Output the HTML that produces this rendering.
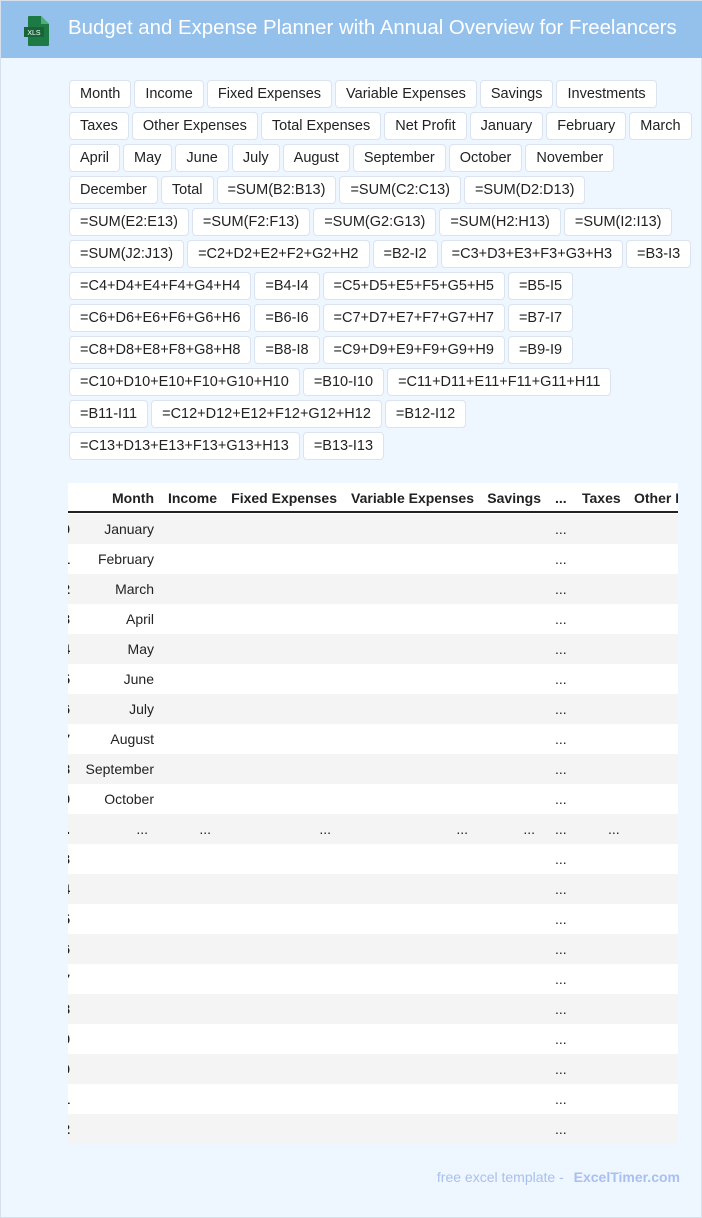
<!DOCTYPE html>
<html><head><meta charset="utf-8"><style>
*{box-sizing:border-box;margin:0;padding:0}
body{width:702px;height:1218px;background:#eef6ff;font-family:"Liberation Sans",sans-serif;position:relative;overflow:hidden;border:1px solid #d6e0ec}
.hdr{position:absolute;left:0;top:0;width:702px;height:57px;background:#93c1ec}
.hdr h1{position:absolute;left:67px;top:16px;font-size:20.4px;font-weight:normal;color:#fff;white-space:nowrap}
.tags{position:absolute;left:68px;top:79px;width:634px;display:flex;flex-wrap:wrap;gap:0 3px}
.tag{height:28px;line-height:26px;padding:0 10px;margin-bottom:4px;background:#fff;border:1px solid #dbe3ee;border-radius:4px;font-size:14.5px;color:#222;white-space:nowrap}
.br{flex-basis:100%;height:0}
.tbl{position:absolute;left:67px;top:482px;width:610px;height:660px;overflow:hidden;background:#fff}
.row{position:absolute;left:0;width:610px;height:30px;font-size:14px;color:#222}
.row span{position:absolute;top:7px;white-space:nowrap}
.g{background:#f4f4f4}
.th{font-weight:bold;border-bottom:2px solid #222;height:30px}
.foot{position:absolute;right:21px;top:1168px;font-size:14px;color:#aac0ec}
.foot b{color:#a9bff0;margin-left:6px}
</style></head><body>
<div class="hdr">
<svg style="position:absolute;left:22px;top:14px" width="28" height="32" viewBox="0 0 28 32"><path d="M6 1h12l8 8v21a1 1 0 0 1-1 1H6a1 1 0 0 1-1-1V2a1 1 0 0 1 1-1z" fill="#1e7a45"/><path d="M18 1v8h8z" fill="#4caf74"/><rect x="1" y="12" width="20" height="10" fill="#17643a"/><text x="11" y="20" font-size="7" fill="#fff" text-anchor="middle" font-family="Liberation Sans">XLS</text></svg>
<h1>Budget and Expense Planner with Annual Overview for Freelancers</h1></div>
<div class="tags">
<span class="tag">Month</span><span class="tag">Income</span><span class="tag">Fixed Expenses</span><span class="tag">Variable Expenses</span><span class="tag">Savings</span><span class="tag">Investments</span><div class="br"></div>
<span class="tag">Taxes</span><span class="tag">Other Expenses</span><span class="tag">Total Expenses</span><span class="tag">Net Profit</span><span class="tag">January</span><span class="tag">February</span><span class="tag">March</span><div class="br"></div>
<span class="tag">April</span><span class="tag">May</span><span class="tag">June</span><span class="tag">July</span><span class="tag">August</span><span class="tag">September</span><span class="tag">October</span><span class="tag">November</span><div class="br"></div>
<span class="tag">December</span><span class="tag">Total</span><span class="tag">=SUM(B2:B13)</span><span class="tag">=SUM(C2:C13)</span><span class="tag">=SUM(D2:D13)</span><div class="br"></div>
<span class="tag">=SUM(E2:E13)</span><span class="tag">=SUM(F2:F13)</span><span class="tag">=SUM(G2:G13)</span><span class="tag">=SUM(H2:H13)</span><span class="tag">=SUM(I2:I13)</span><div class="br"></div>
<span class="tag">=SUM(J2:J13)</span><span class="tag">=C2+D2+E2+F2+G2+H2</span><span class="tag">=B2-I2</span><span class="tag">=C3+D3+E3+F3+G3+H3</span><span class="tag">=B3-I3</span><div class="br"></div>
<span class="tag">=C4+D4+E4+F4+G4+H4</span><span class="tag">=B4-I4</span><span class="tag">=C5+D5+E5+F5+G5+H5</span><span class="tag">=B5-I5</span><div class="br"></div>
<span class="tag">=C6+D6+E6+F6+G6+H6</span><span class="tag">=B6-I6</span><span class="tag">=C7+D7+E7+F7+G7+H7</span><span class="tag">=B7-I7</span><div class="br"></div>
<span class="tag">=C8+D8+E8+F8+G8+H8</span><span class="tag">=B8-I8</span><span class="tag">=C9+D9+E9+F9+G9+H9</span><span class="tag">=B9-I9</span><div class="br"></div>
<span class="tag">=C10+D10+E10+F10+G10+H10</span><span class="tag">=B10-I10</span><span class="tag">=C11+D11+E11+F11+G11+H11</span><div class="br"></div>
<span class="tag">=B11-I11</span><span class="tag">=C12+D12+E12+F12+G12+H12</span><span class="tag">=B12-I12</span><div class="br"></div>
<span class="tag">=C13+D13+E13+F13+G13+H13</span><span class="tag">=B13-I13</span>
</div>
<div class="tbl" id="t">
<div class="row th" style="top:0"><span style="right:524px">Month</span><span style="right:461px">Income</span><span style="right:341px">Fixed Expenses</span><span style="right:204px">Variable Expenses</span><span style="right:137px">Savings</span><span style="left:487px">...</span><span style="left:514px">Taxes</span><span style="left:566px">Other Expenses</span></div>
</div>
<div class="foot">free excel template - <b>ExcelTimer.com</b></div>
<script>
(function(){
var m=["January","February","March","April","May","June","July","August","September","October"];
var t=document.getElementById('t'),h='';
for(var i=0;i<21;i++){
 var y=31+i*30,cls='row'+(i%2==0?' g':'');
 var idx,c='';
 if(i<10){idx=''+i;c='<span style="right:524px">'+m[i]+'</span><span style="left:487px">...</span>';}
 else if(i==10){idx='.';[524,461,341,204,137].forEach(function(r){c+='<span style="right:'+(r+6)+'px">...</span>'});c+='<span style="left:487px">...</span><span style="left:540px">...</span>';}
 else{idx=''+((i+2)%10);c='<span style="left:487px">...</span>';}
 h+='<div class="'+cls+'" style="top:'+y+'px"><span style="right:608px;font-weight:bold">'+idx+'</span>'+c+'</div>';
}
t.insertAdjacentHTML('beforeend',h);
})();
</script>
</body></html>
